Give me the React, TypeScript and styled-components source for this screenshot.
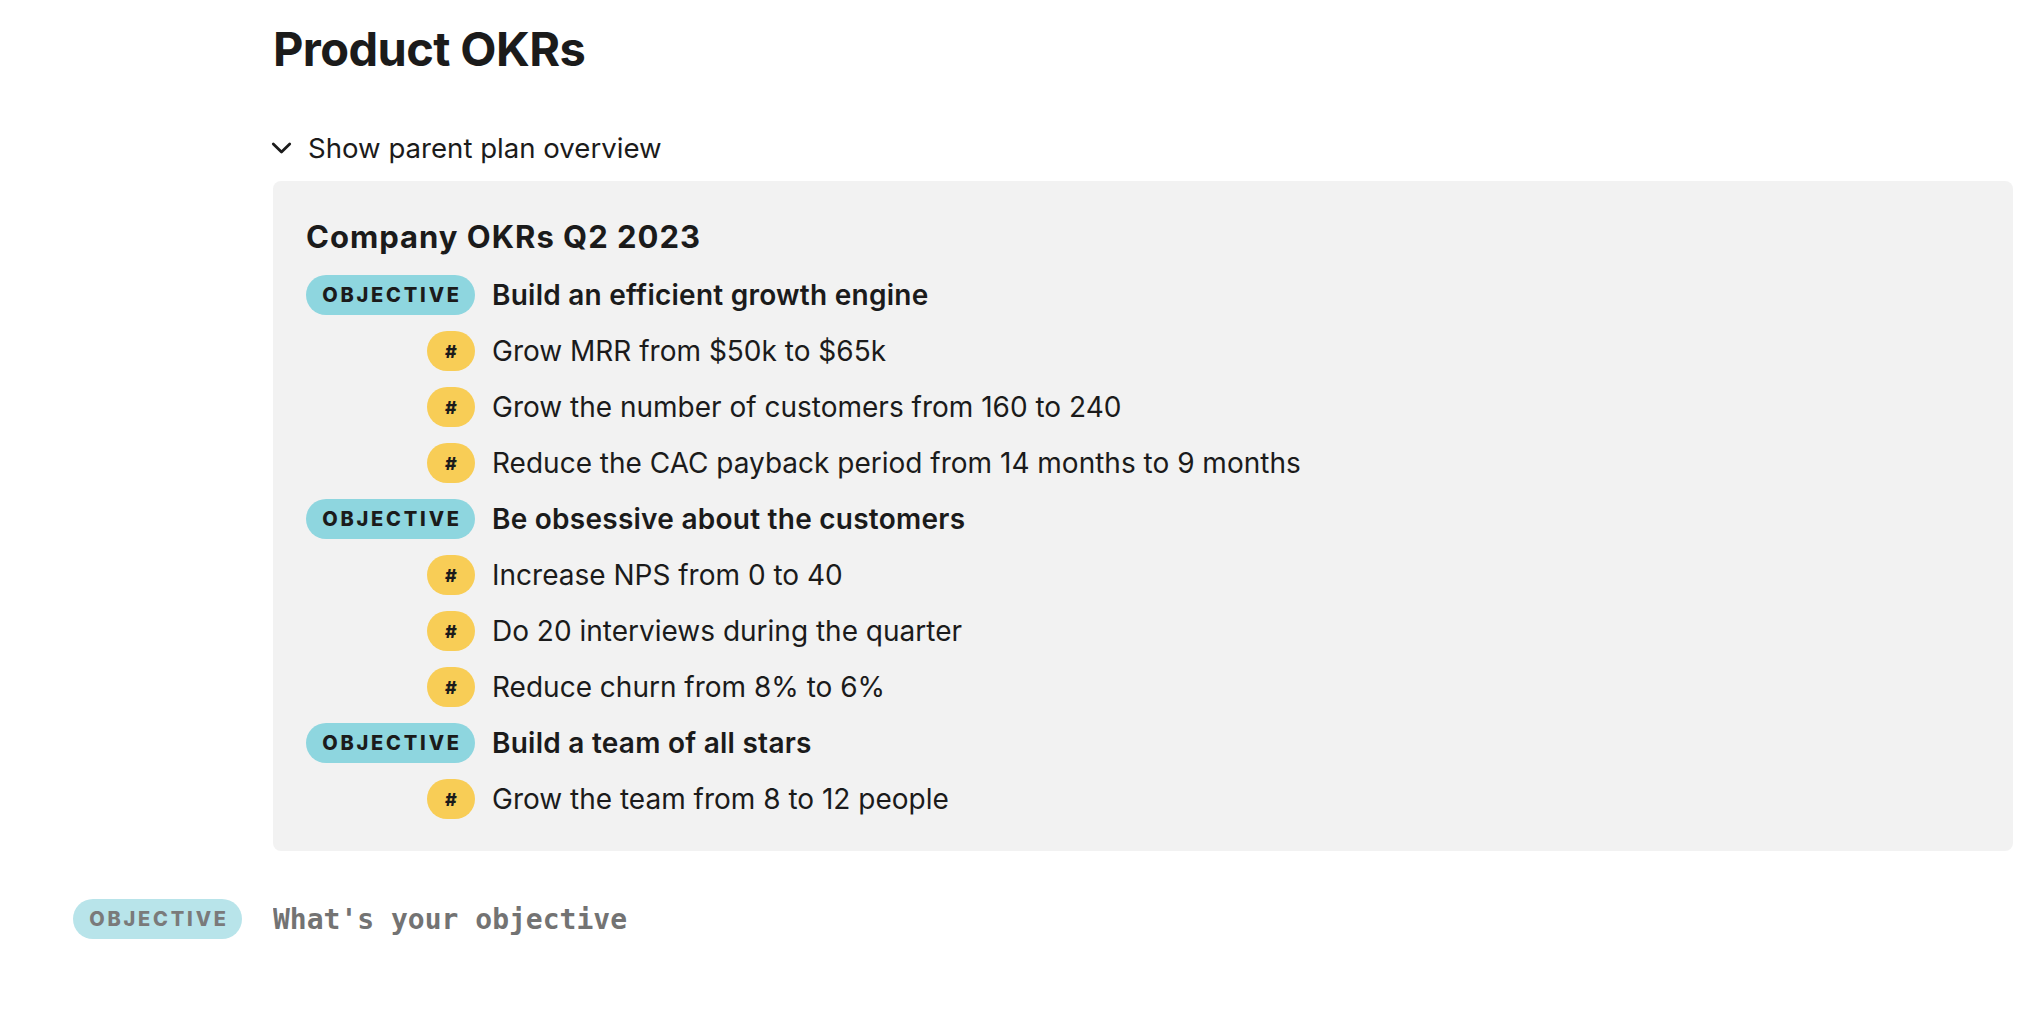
import styled, { createGlobalStyle } from 'styled-components';
import type { JSX } from 'react';

type Objective = {
  title: string;
  results: string[];
};

const objectives: Objective[] = [
  {
    title: 'Build an efficient growth engine',
    results: [
      'Grow MRR from $50k to $65k',
      'Grow the number of customers from 160 to 240',
      'Reduce the CAC payback period from 14 months to 9 months',
    ],
  },
  {
    title: 'Be obsessive about the customers',
    results: [
      'Increase NPS from 0 to 40',
      'Do 20 interviews during the quarter',
      'Reduce churn from 8% to 6%',
    ],
  },
  {
    title: 'Build a team of all stars',
    results: ['Grow the team from 8 to 12 people'],
  },
];

const GlobalStyle = createGlobalStyle`
  html, body {
    margin: 0;
    padding: 0;
    background: #ffffff;
  }

  body {
    font-family: Inter, "Noto Sans", "Liberation Sans", sans-serif;
    color: #1b1b1b;
    -webkit-font-smoothing: antialiased;
  }
`;

const ChevronDown = (): JSX.Element => (
  <svg width="21" height="12" viewBox="0 0 21 12" fill="none">
    <polyline
      points="2.3,2 10.5,10 18.7,2"
      stroke="#1b1b1b"
      strokeWidth="2.8"
      strokeLinecap="round"
      strokeLinejoin="round"
    />
  </svg>
);

export default function App(): JSX.Element {
  return (
    <>
      <GlobalStyle />
      <Page>
        <Main>
          <PageTitle>Product OKRs</PageTitle>

          <Toggle type="button">
            <ChevronDown />
            <span>Show parent plan overview</span>
          </Toggle>

          <ParentPanel>
            <PanelTitle>Company OKRs Q2 2023</PanelTitle>

            <OkrList>
              {objectives.map((objective) => (
                <ObjectiveGroup key={objective.title}>
                  <Row>
                    <LabelCell>
                      <ObjectivePill>OBJECTIVE</ObjectivePill>
                    </LabelCell>
                    <ObjectiveText>{objective.title}</ObjectiveText>
                  </Row>

                  {objective.results.map((result) => (
                    <Row key={result}>
                      <LabelCell>
                        <ResultBadge>#</ResultBadge>
                      </LabelCell>
                      <ResultText>{result}</ResultText>
                    </Row>
                  ))}
                </ObjectiveGroup>
              ))}
            </OkrList>
          </ParentPanel>
        </Main>

        <NewObjectiveRow>
          <Gutter>
            <ObjectivePill $muted>OBJECTIVE</ObjectivePill>
          </Gutter>
          <ObjectiveInput placeholder="What's your objective" />
        </NewObjectiveRow>
      </Page>
    </>
  );
}

const Page = styled.div`
  width: 2036px;
  min-height: 1032px;
  box-sizing: border-box;
  padding: 20px 23px 0 0;
  display: flex;
  flex-direction: column;
`;

const Main = styled.div`
  margin-left: 273px;
  display: flex;
  flex-direction: column;
  align-items: flex-start;
`;

const PageTitle = styled.h1`
  margin: 0;
  font-size: 47px;
  line-height: 58px;
  font-weight: 700;
  letter-spacing: -0.6px;
  color: #1b1b1b;
`;

const Toggle = styled.button`
  margin: 50px 0 0 -2px;
  padding: 0;
  border: none;
  background: none;
  display: flex;
  align-items: center;
  gap: 16px;
  font-family: inherit;
  font-size: 27.6px;
  line-height: 40px;
  color: #1b1b1b;
  cursor: pointer;
`;

const ParentPanel = styled.section`
  align-self: stretch;
  margin-top: 13px;
  padding: 33px 33px 32px;
  background: #f2f2f2;
  border-radius: 8px;
`;

const PanelTitle = styled.h2`
  margin: 0;
  font-size: 31px;
  line-height: 45px;
  font-weight: 700;
  letter-spacing: 1px;
  color: #1b1b1b;
`;

const OkrList = styled.div`
  margin-top: 16px;
  display: flex;
  flex-direction: column;
  gap: 16px;
`;

const ObjectiveGroup = styled.div`
  display: flex;
  flex-direction: column;
  gap: 16px;
`;

const Row = styled.div`
  display: grid;
  grid-template-columns: 169px 1fr;
  column-gap: 17px;
  align-items: center;
  height: 40px;
`;

const LabelCell = styled.div`
  display: flex;
  justify-content: flex-end;
`;

const ObjectivePill = styled.span<{ $muted?: boolean }>`
  width: 169px;
  height: 40px;
  box-sizing: border-box;
  padding-left: 3px;
  border-radius: 20px;
  display: flex;
  align-items: center;
  justify-content: center;
  font-family: Inter, "Noto Sans", sans-serif;
  font-size: 20px;
  font-weight: 800;
  letter-spacing: 2.8px;
  background: ${(props): string => (props.$muted ? '#b8e4ea' : '#8ed6df')};
  color: ${(props): string => (props.$muted ? '#7a7a7a' : '#1b1b1b')};
`;

const ResultBadge = styled.span`
  width: 48px;
  height: 40px;
  border-radius: 20px;
  background: #f8cd56;
  display: flex;
  align-items: center;
  justify-content: center;
  font-size: 18px;
  font-weight: 800;
  color: #1b1b1b;
`;

const ObjectiveText = styled.span`
  font-size: 28px;
  font-weight: 600;
  letter-spacing: 0.25px;
  color: #1b1b1b;
`;

const ResultText = styled.span`
  font-size: 28px;
  font-weight: 400;
  color: #1b1b1b;
`;

const NewObjectiveRow = styled.div`
  margin-top: 48px;
  display: grid;
  grid-template-columns: 273px 1fr;
  align-items: center;
  height: 40px;
`;

const Gutter = styled.div`
  display: flex;
  justify-content: flex-end;
  padding-right: 31px;
`;

const ObjectiveInput = styled.input`
  border: none;
  outline: none;
  background: transparent;
  padding: 0;
  margin: 0;
  font-family: "DejaVu Sans Mono", "Liberation Mono", monospace;
  font-size: 28px;
  font-weight: 700;
  color: #737373;

  &::placeholder {
    color: #737373;
    opacity: 1;
  }
`;
